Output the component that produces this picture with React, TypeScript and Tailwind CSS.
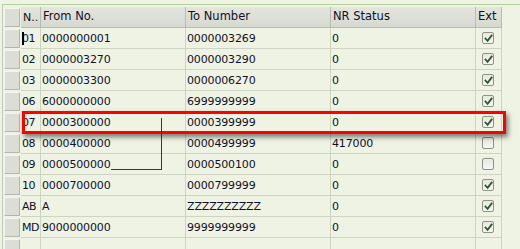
import React from "react";

type Row = { n: string; from: string; to: string; nr: string; ext: boolean };

const rows: Row[] = [
  { n: "01", from: "0000000001", to: "0000003269", nr: "0", ext: true },
  { n: "02", from: "0000003270", to: "0000003290", nr: "0", ext: true },
  { n: "03", from: "0000003300", to: "0000006270", nr: "0", ext: true },
  { n: "06", from: "6000000000", to: "6999999999", nr: "0", ext: true },
  { n: "07", from: "0000300000", to: "0000399999", nr: "0", ext: true },
  { n: "08", from: "0000400000", to: "0000499999", nr: "417000", ext: false },
  { n: "09", from: "0000500000", to: "0000500100", nr: "0", ext: false },
  { n: "10", from: "0000700000", to: "0000799999", nr: "0", ext: true },
  { n: "AB", from: "A", to: "ZZZZZZZZZZ", nr: "0", ext: true },
  { n: "MD", from: "9000000000", to: "9999999999", nr: "0", ext: true },
];

function SelBtn() {
  return (
    <div className="w-[18px] shrink-0 flex items-stretch py-[1px] pl-[1px] pr-[1px]">
      <div className="flex-1 bg-[#dcded5] border-t border-l border-[#f4f5ef] border-b border-r border-b-[#b4b8ac] border-r-[#b4b8ac]" />
    </div>
  );
}

function Check({ on }: { on: boolean }) {
  return (
    <div className="w-[12px] h-[12px] rounded-[2px] border border-[#8d9386] bg-gradient-to-b from-[#e6e9e0] to-[#f6f7f2] flex items-center justify-center">
      {on && (
        <svg width="9" height="9" viewBox="0 0 9 9">
          <path d="M1.5 4.5 L3.6 6.8 L7.6 1.6" fill="none" stroke="#2d5a2a" strokeWidth="1.8" strokeLinecap="square" />
        </svg>
      )}
    </div>
  );
}

export default function App() {
  return (
    <div className="w-[520px] h-[249px] overflow-hidden bg-[#eef3e3] pt-[4px] relative font-['DejaVu_Sans',sans-serif] text-[11px] text-[#10102a] leading-none">
      <div className="ml-[2px] border-t border-l border-t-[#b3cf9c] border-l-[#c2cbb8] pt-[2px] h-[300px]">
        {/* header */}
        <div className="flex h-[21px] w-[500px]">
          <SelBtn />
          <div className="w-[20px] shrink-0 bg-gradient-to-b from-[#e4e6de] to-[#d6d9cf] border-r border-b border-[#b7bcb0] flex items-center pl-[2px]">N..</div>
          <div className="w-[145px] shrink-0 bg-gradient-to-b from-[#e4e6de] to-[#d6d9cf] border-r border-b border-[#b7bcb0] flex items-center pl-[2px] text-[11.5px]">From No.</div>
          <div className="w-[145px] shrink-0 bg-gradient-to-b from-[#e4e6de] to-[#d6d9cf] border-r border-b border-[#b7bcb0] flex items-center pl-[2px] text-[11.5px]">To Number</div>
          <div className="w-[145px] shrink-0 bg-gradient-to-b from-[#e4e6de] to-[#d6d9cf] border-r border-b border-[#b7bcb0] flex items-center pl-[2px] text-[11.5px]">NR Status</div>
          <div className="w-[26px] shrink-0 bg-gradient-to-b from-[#e4e6de] to-[#d6d9cf] border-r border-b border-[#b7bcb0] flex items-center pl-[2px] text-[11.5px]">Ext</div>
        </div>
        {[...rows, null].map((r, i) => (
          <div key={i} className="flex h-[21px] w-[500px]">
            <SelBtn />
            <div className="w-[20px] shrink-0 border-r border-b border-[#cdd5c2] flex items-center pl-[1px] relative tracking-[-0.6px] overflow-hidden">
              {i === 0 && <span className="absolute left-[1px] top-[4px] w-[2px] h-[13px] bg-black" />}
              {r?.n}
            </div>
            <div className="w-[145px] shrink-0 border-r border-b border-[#cdd5c2] flex items-center pl-[1px] tracking-[-0.15px]">{r?.from}</div>
            <div className="w-[145px] shrink-0 border-r border-b border-[#cdd5c2] flex items-center pl-[1px] tracking-[-0.15px]">{r?.to}</div>
            <div className="w-[145px] shrink-0 border-r border-b border-[#cdd5c2] flex items-center pl-[1px] tracking-[-0.15px]">{r?.nr}</div>
            <div className="w-[26px] shrink-0 border-r border-b border-[#cdd5c2] flex items-center justify-center pr-[1px]">
              {r && <Check on={r.ext} />}
            </div>
          </div>
        ))}
      </div>
      {/* red highlight box */}
      <div className="absolute left-[22px] top-[111px] w-[484px] h-[23px] border-[3px] border-[#ff0000] shadow-[2px_3px_5px_rgba(0,0,0,0.5)]" />
      {/* annotation line */}
      <div className="absolute left-[161px] top-[118px] w-[1px] h-[52px] bg-[#9a0c10]" />
      <div className="absolute left-[111px] top-[169px] w-[51px] h-[1px] bg-[#9a0c10]" />
    </div>
  );
}
